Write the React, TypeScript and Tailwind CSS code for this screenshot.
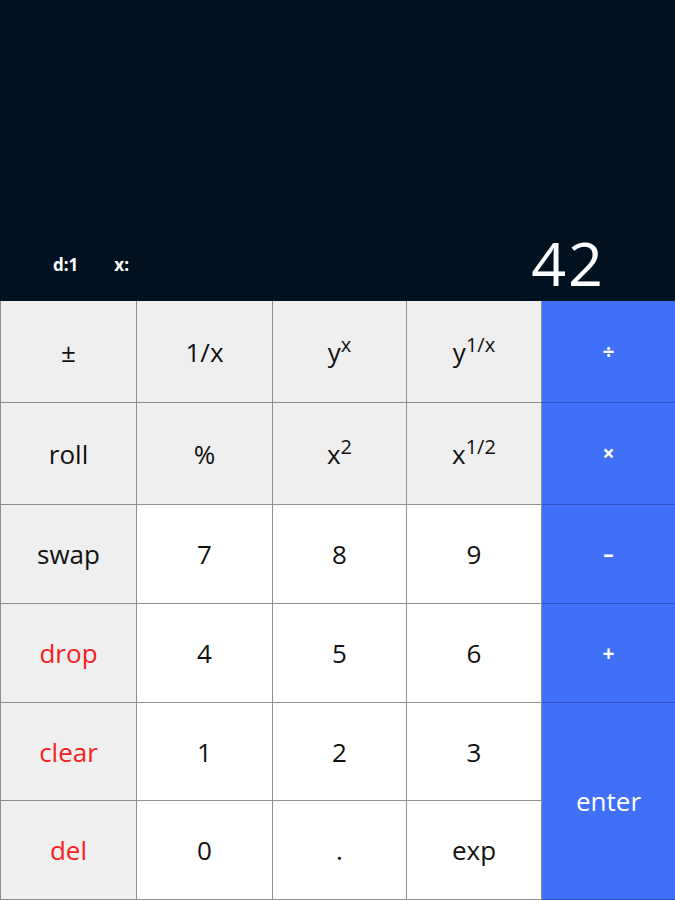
import type { ReactNode } from "react";

type Key = { label: ReactNode; kind: "fn" | "num" | "op" | "red"; span?: boolean };

const sup = (base: string, exp: string) => (
  <span>
    {base}
    <sup className="text-[20px] relative -top-[10px]">{exp}</sup>
  </span>
);

const keys: Key[] = [
  { label: "±", kind: "fn" },
  { label: "1/x", kind: "fn" },
  { label: sup("y", "x"), kind: "fn" },
  { label: sup("y", "1/x"), kind: "fn" },
  { label: "÷", kind: "op" },
  { label: "roll", kind: "fn" },
  { label: "%", kind: "fn" },
  { label: sup("x", "2"), kind: "fn" },
  { label: sup("x", "1/2"), kind: "fn" },
  { label: "×", kind: "op" },
  { label: "swap", kind: "fn" },
  { label: "7", kind: "num" },
  { label: "8", kind: "num" },
  { label: "9", kind: "num" },
  { label: "–", kind: "op" },
  { label: "drop", kind: "red" },
  { label: "4", kind: "num" },
  { label: "5", kind: "num" },
  { label: "6", kind: "num" },
  { label: "+", kind: "op" },
  { label: "clear", kind: "red" },
  { label: "1", kind: "num" },
  { label: "2", kind: "num" },
  { label: "3", kind: "num" },
  { label: "enter", kind: "op", span: true },
  { label: "del", kind: "red" },
  { label: "0", kind: "num" },
  { label: ".", kind: "num" },
  { label: "exp", kind: "num" },
];

function keyClass(k: Key) {
  if (k.kind === "op")
    return "bg-[#4170f8] text-white border-[#2f4fc4] " + (k.span ? "row-span-2 text-[26px]" : "text-[21px] font-bold");
  if (k.kind === "num") return "bg-white text-[#111] border-[#8f8f8f] text-[26px]";
  if (k.kind === "red") return "bg-[#efefef] text-[#f52020] border-[#8f8f8f] text-[26px]";
  return "bg-[#efefef] text-[#111] border-[#8f8f8f] text-[26px]";
}

export default function App() {
  return (
    <div className="w-[675px] h-[900px] flex flex-col font-['Open_Sans',sans-serif] select-none">
      <div className="h-[301px] bg-[#001120] flex items-end justify-between pl-[53px] pr-[70px] pb-[8px]">
        <div className="flex gap-[36px] text-white font-bold text-[17px] mb-[16px]">
          <span>d:1</span>
          <span>x:</span>
        </div>
        <div className="text-white text-[61px] leading-none tracking-[2px]">42</div>
      </div>
      <div className="grid grid-cols-[136px_136px_134px_135px_134px] grid-rows-[102px_102px_99px_99px_98px_99px] flex-1 border-l border-[#8f8f8f]">
        {keys.map((k, i) => (
          <button
            key={i}
            className={
              "flex items-center justify-center border-r border-b leading-none " + keyClass(k)
            }
          >
            {k.label}
          </button>
        ))}
      </div>
    </div>
  );
}
